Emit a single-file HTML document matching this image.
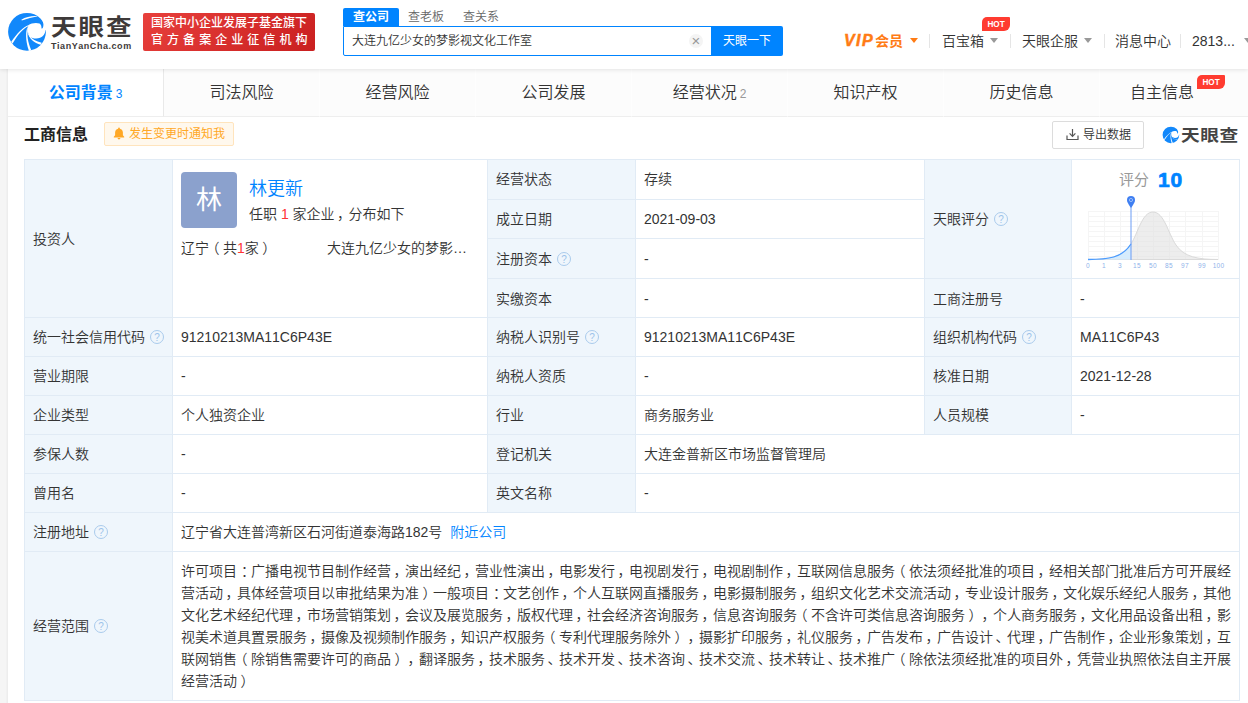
<!DOCTYPE html>
<html lang="zh-CN">
<head>
<meta charset="utf-8">
<title>天眼查</title>
<style>
*{box-sizing:border-box;margin:0;padding:0}
html,body{width:1248px;height:703px;overflow:hidden;background:#f5f5f5}
body{text-spacing-trim:space-all;font-kerning:none;font-family:"Liberation Sans","Noto Sans CJK SC",sans-serif;font-size:14px;color:#333;position:relative}
.abs{position:absolute;white-space:nowrap}
/* header */
#hdr{position:absolute;left:0;top:0;width:1248px;height:69px;background:#fff;box-shadow:0 1px 4px rgba(0,0,0,.10);z-index:5}
#content{position:absolute;left:8px;top:69px;width:1240px;height:634px;background:#fff}
/* tabs */
#tabs{position:absolute;left:8px;top:69px;width:1248px;height:48px;background:#fff}
.tab{position:absolute;top:0;height:48px;width:156px;text-align:center;line-height:47px;font-size:16px;color:#333;font-weight:350;background:#fcfcfc;border-right:1px solid #fefefe;border-bottom:1px solid #eee}
.tab.on{background:#fff;color:#0084ff;font-weight:bold;border-right:1px solid #e9e9e9}
.tab small{font-size:12px;font-weight:normal;color:#999;margin-left:3px}
.tab.on small{color:#0084ff}
.hot{display:inline-block;background:#ff3b30;color:#fff;font-size:9.500px;font-weight:bold;line-height:13.500px;height:14px;width:28px;text-align:center;border-radius:5px 1px 6px 0;letter-spacing:0}
.hot b{display:inline-block;transform:scaleX(.86);font-weight:bold}
.tri{width:0;height:0;border:4px solid transparent;border-top:5px solid #999;border-bottom:0}
.sep{top:34px;width:1px;height:14px;background:#e5e5e5}
/* table */
.ln{background:#e1ebf5}
.t{font-size:14px;color:#333;font-weight:350}
.pc,.pm,.pl,.pr{position:relative}
.pc{left:2.500px}.pm{left:4px}.pl{left:-3.500px}.pr{left:3.500px}
.t .q{vertical-align:middle;position:relative;top:-1px}
#tbl{position:absolute;left:24px;top:159px;width:1216px;height:542px;border:1px solid #e0eaf4;background:#fff}
.c{position:absolute;border-right:1px solid #e0eaf4;border-bottom:1px solid #e0eaf4;padding-left:8px;font-size:14px;color:#333;white-space:nowrap;display:flex;align-items:center}
.l{background:#f0f6fc}
.q{display:inline-block;width:14px;height:14px;border:1px solid #aacbec;border-radius:50%;margin-left:5px;color:#9dc3ea;font-size:10px;line-height:13.500px;text-align:center;font-family:"Liberation Sans",sans-serif}
a{color:#0084ff;text-decoration:none}
</style>
</head>
<body>
<div id="content"></div>
<div class="abs" style="left:6px;top:69px;width:2px;height:634px;background:linear-gradient(90deg,#f3f3f3,#ebebeb)"></div>
<div id="tabs">
  <div class="tab on" style="left:0">公司背景<small>3</small></div>
  <div class="tab" style="left:156px">司法风险</div>
  <div class="tab" style="left:312px">经营风险</div>
  <div class="tab" style="left:468px">公司发展</div>
  <div class="tab" style="left:624px">经营状况<small>2</small></div>
  <div class="tab" style="left:780px">知识产权</div>
  <div class="tab" style="left:936px">历史信息</div>
  <div class="tab" style="left:1092px">自主信息<span class="hot" style="position:relative;top:-13px;margin-left:3px"><b>HOT</b></span></div>
</div>
<div id="hdr">
  <svg class="abs" style="left:4px;top:8px" width="48" height="48" viewBox="0 0 703 703">
    <circle cx="337" cy="349" r="277" fill="#1288fb"/>
    <path fill="#fff" d="M355 252 C400 222 470 210 520 228 C545 245 552 275 548 302 L566 298 C585 260 580 215 560 180 L650 180 L650 330 L610 322 C600 392 560 446 470 447 C430 447 400 437 376 420 C352 385 340 330 355 252 Z"/>
    <path fill="#fff" d="M362 248 C280 280 190 370 106 493 L126 520 C200 390 280 300 354 266 Z"/>
    <path fill="#fff" d="M346 270 C318 340 308 460 366 630 L400 620 C345 480 335 400 350 340 Z"/>
    <path fill="#fff" d="M345 350 C362 445 445 510 538 540 L552 508 C470 490 405 455 374 404 Z"/>
    <path fill="#fff" d="M254 172 C320 130 420 112 498 121 C420 136 340 158 262 183 Z"/>
  </svg>
  <div class="abs" style="left:51px;top:8px;font-size:25px;line-height:36px;font-weight:bold;color:#3e3a39;letter-spacing:2px;transform:scale(1.02,.9);transform-origin:0 29px">天眼查</div>
  <div class="abs" style="left:51px;top:39.500px;font-size:9px;line-height:12px;font-weight:bold;color:#3e3a39;letter-spacing:.55px">TianYanCha.com</div>
  <div class="abs" style="left:143px;top:13px;width:172px;height:38px;border-radius:2px;background:linear-gradient(135deg,#e8403c,#c91f1f);color:#fff;font-weight:500;font-size:12px;line-height:17px;padding:2px 0 0 8px">
    <div style="letter-spacing:0">国家中小企业发展子基金旗下</div>
    <div style="letter-spacing:4.050px">官方备案企业征信机构</div>
  </div>
  <div class="abs" style="left:343px;top:8px;width:56px;height:18px;background:#0084ff;color:#fff;font-size:12px;font-weight:bold;line-height:18px;text-align:center;border-radius:2px 2px 0 0">查公司</div>
  <div class="abs" style="left:408px;top:8px;font-size:12px;line-height:18px;color:#666;font-weight:350">查老板</div>
  <div class="abs" style="left:463px;top:8px;font-size:12px;line-height:18px;color:#666;font-weight:350">查关系</div>
  <div class="abs" style="left:343px;top:26px;width:370px;height:30px;border:1px solid #0084ff;border-radius:0 0 0 2px;background:#fff;font-size:12px;line-height:28px;padding-left:8px;color:#333;font-weight:350">大连九亿少女的梦影视文化工作室</div>
  <div class="abs" style="left:689px;top:34px;width:14px;height:14px;border-radius:50%;background:#f4f4f4;color:#999;font-size:15px;line-height:13px;text-align:center">×</div>
  <div class="abs" style="left:711px;top:26px;width:72px;height:30px;background:#0084ff;color:#fff;font-size:12px;line-height:30px;text-align:center;border-radius:0 2px 2px 0">天眼一下</div>

  <div class="abs" style="left:844px;top:30px;font-size:14px;line-height:22px;font-weight:bold;color:#ff7b14"><i style="font-size:16px;letter-spacing:1.400px;-webkit-text-stroke:.5px #ff7b14">VIP</i><span style="margin-left:1px">会员</span></div>
  <div class="abs tri" style="left:910px;top:38px;border-top-color:#ff7b14"></div>
  <div class="abs sep" style="left:929px"></div>
  <div class="abs" style="left:942px;top:30px;font-size:14px;line-height:22px;font-weight:350">百宝箱</div>
  <div class="abs tri" style="left:990px;top:38px"></div>
  <div class="abs hot" style="left:982px;top:17px"><b>HOT</b></div>
  <div class="abs sep" style="left:1010px"></div>
  <div class="abs" style="left:1022px;top:30px;font-size:14px;line-height:22px;font-weight:350">天眼企服</div>
  <div class="abs tri" style="left:1084px;top:38px"></div>
  <div class="abs sep" style="left:1104px"></div>
  <div class="abs" style="left:1115px;top:30px;font-size:14px;line-height:22px;font-weight:350">消息中心</div>
  <div class="abs sep" style="left:1180px"></div>
  <div class="abs" style="left:1192px;top:30px;font-size:14px;line-height:22px;font-weight:350">2813...</div>
  <div class="abs tri" style="left:1244px;top:38px"></div>
</div>
<!--TABLE-START-->
<div class="abs" style="left:24px;top:159px;width:148px;height:541px;background:#eff6fc"></div>
<div class="abs" style="left:487px;top:159px;width:148px;height:353px;background:#eff6fc"></div>
<div class="abs" style="left:924px;top:159px;width:147px;height:275px;background:#eff6fc"></div>
<div class="abs ln" style="left:24px;top:159px;width:1216px;height:1px"></div>
<div class="abs ln" style="left:487px;top:199px;width:438px;height:1px"></div>
<div class="abs ln" style="left:487px;top:238px;width:438px;height:1px"></div>
<div class="abs ln" style="left:487px;top:278px;width:753px;height:1px"></div>
<div class="abs ln" style="left:24px;top:317px;width:1216px;height:1px"></div>
<div class="abs ln" style="left:24px;top:356px;width:1216px;height:1px"></div>
<div class="abs ln" style="left:24px;top:395px;width:1216px;height:1px"></div>
<div class="abs ln" style="left:24px;top:434px;width:1216px;height:1px"></div>
<div class="abs ln" style="left:24px;top:473px;width:1216px;height:1px"></div>
<div class="abs ln" style="left:24px;top:512px;width:1216px;height:1px"></div>
<div class="abs ln" style="left:24px;top:551px;width:1216px;height:1px"></div>
<div class="abs ln" style="left:24px;top:700px;width:1216px;height:1px"></div>
<div class="abs ln" style="left:24px;top:159px;width:1px;height:542px"></div>
<div class="abs ln" style="left:1239px;top:159px;width:1px;height:542px"></div>
<div class="abs ln" style="left:172px;top:159px;width:1px;height:542px"></div>
<div class="abs ln" style="left:487px;top:159px;width:1px;height:354px"></div>
<div class="abs ln" style="left:635px;top:159px;width:1px;height:354px"></div>
<div class="abs ln" style="left:924px;top:159px;width:1px;height:276px"></div>
<div class="abs ln" style="left:1071px;top:159px;width:1px;height:276px"></div>
<div class="abs t" style="left:33px;top:161px;height:157px;line-height:157px;">投资人</div>
<div class="abs t" style="left:496px;top:160px;height:39px;line-height:39px;">经营状态</div>
<div class="abs t" style="left:644px;top:160px;height:39px;line-height:39px;">存续</div>
<div class="abs t" style="left:496px;top:200px;height:38px;line-height:38px;">成立日期</div>
<div class="abs t" style="left:644px;top:200px;height:38px;line-height:38px;">2021-09-03</div>
<div class="abs t" style="left:496px;top:239.5px;height:39.0px;line-height:39.0px;">注册资本<span class="q">?</span></div>
<div class="abs t" style="left:644px;top:239.5px;height:39.0px;line-height:39.0px;">-</div>
<div class="abs t" style="left:496px;top:279.5px;height:38.0px;line-height:38.0px;">实缴资本</div>
<div class="abs t" style="left:644px;top:279.5px;height:38.0px;line-height:38.0px;">-</div>
<div class="abs t" style="left:933px;top:160px;height:118px;line-height:118px;">天眼评分<span class="q">?</span></div>
<div class="abs t" style="left:933px;top:279.5px;height:38.0px;line-height:38.0px;">工商注册号</div>
<div class="abs t" style="left:1080px;top:279.5px;height:38.0px;line-height:38.0px;">-</div>
<div class="abs t" style="left:33px;top:318px;height:38px;line-height:38px;">统一社会信用代码<span class="q">?</span></div>
<div class="abs t" style="left:181px;top:318px;height:38px;line-height:38px;">91210213MA11C6P43E</div>
<div class="abs t" style="left:496px;top:318px;height:38px;line-height:38px;">纳税人识别号<span class="q">?</span></div>
<div class="abs t" style="left:644px;top:318px;height:38px;line-height:38px;">91210213MA11C6P43E</div>
<div class="abs t" style="left:933px;top:318px;height:38px;line-height:38px;">组织机构代码<span class="q">?</span></div>
<div class="abs t" style="left:1080px;top:318px;height:38px;line-height:38px;">MA11C6P43</div>
<div class="abs t" style="left:33px;top:357px;height:38px;line-height:38px;">营业期限</div>
<div class="abs t" style="left:181px;top:357px;height:38px;line-height:38px;">-</div>
<div class="abs t" style="left:496px;top:357px;height:38px;line-height:38px;">纳税人资质</div>
<div class="abs t" style="left:644px;top:357px;height:38px;line-height:38px;">-</div>
<div class="abs t" style="left:933px;top:357px;height:38px;line-height:38px;">核准日期</div>
<div class="abs t" style="left:1080px;top:357px;height:38px;line-height:38px;">2021-12-28</div>
<div class="abs t" style="left:33px;top:396px;height:38px;line-height:38px;">企业类型</div>
<div class="abs t" style="left:181px;top:396px;height:38px;line-height:38px;">个人独资企业</div>
<div class="abs t" style="left:496px;top:396px;height:38px;line-height:38px;">行业</div>
<div class="abs t" style="left:644px;top:396px;height:38px;line-height:38px;">商务服务业</div>
<div class="abs t" style="left:933px;top:396px;height:38px;line-height:38px;">人员规模</div>
<div class="abs t" style="left:1080px;top:396px;height:38px;line-height:38px;">-</div>
<div class="abs t" style="left:33px;top:435px;height:38px;line-height:38px;">参保人数</div>
<div class="abs t" style="left:181px;top:435px;height:38px;line-height:38px;">-</div>
<div class="abs t" style="left:496px;top:435px;height:38px;line-height:38px;">登记机关</div>
<div class="abs t" style="left:644px;top:435px;height:38px;line-height:38px;">大连金普新区市场监督管理局</div>
<div class="abs t" style="left:33px;top:474px;height:38px;line-height:38px;">曾用名</div>
<div class="abs t" style="left:181px;top:474px;height:38px;line-height:38px;">-</div>
<div class="abs t" style="left:496px;top:474px;height:38px;line-height:38px;">英文名称</div>
<div class="abs t" style="left:644px;top:474px;height:38px;line-height:38px;">-</div>
<div class="abs t" style="left:33px;top:513px;height:38px;line-height:38px;">注册地址<span class="q">?</span></div>
<div class="abs t" style="left:181px;top:513px;height:38px;line-height:38px;">辽宁省大连普湾新区石河街道泰海路182号<a style="margin-left:8px">附近公司</a></div>
<div class="abs t" style="left:33px;top:552px;height:148px;line-height:148px;">经营范围<span class="q">?</span></div>
<div class="abs t" style="left:181px;top:560px;line-height:22px;width:1050px"><div>许可项目<span class="pm">：</span>广播电视节目制作经营<span class="pc">，</span>演出经纪<span class="pc">，</span>营业性演出<span class="pc">，</span>电影发行<span class="pc">，</span>电视剧发行<span class="pc">，</span>电视剧制作<span class="pc">，</span>互联网信息服务<span class="pl">（</span>依法须经批准的项目<span class="pc">，</span>经相关部门批准后方可开展经</div><div>营活动<span class="pc">，</span>具体经营项目以审批结果为准<span class="pr">）</span>一般项目<span class="pm">：</span>文艺创作<span class="pc">，</span>个人互联网直播服务<span class="pc">，</span>电影摄制服务<span class="pc">，</span>组织文化艺术交流活动<span class="pc">，</span>专业设计服务<span class="pc">，</span>文化娱乐经纪人服务<span class="pc">，</span>其他</div><div>文化艺术经纪代理<span class="pc">，</span>市场营销策划<span class="pc">，</span>会议及展览服务<span class="pc">，</span>版权代理<span class="pc">，</span>社会经济咨询服务<span class="pc">，</span>信息咨询服务<span class="pl">（</span>不含许可类信息咨询服务<span class="pr">）</span><span class="pc">，</span>个人商务服务<span class="pc">，</span>文化用品设备出租<span class="pc">，</span>影</div><div>视美术道具置景服务<span class="pc">，</span>摄像及视频制作服务<span class="pc">，</span>知识产权服务<span class="pl">（</span>专利代理服务除外<span class="pr">）</span><span class="pc">，</span>摄影扩印服务<span class="pc">，</span>礼仪服务<span class="pc">，</span>广告发布<span class="pc">，</span>广告设计<span class="pc">、</span>代理<span class="pc">，</span>广告制作<span class="pc">，</span>企业形象策划<span class="pc">，</span>互</div><div>联网销售<span class="pl">（</span>除销售需要许可的商品<span class="pr">）</span><span class="pc">，</span>翻译服务<span class="pc">，</span>技术服务<span class="pc">、</span>技术开发<span class="pc">、</span>技术咨询<span class="pc">、</span>技术交流<span class="pc">、</span>技术转让<span class="pc">、</span>技术推广<span class="pl">（</span>除依法须经批准的项目外<span class="pc">，</span>凭营业执照依法自主开展</div><div>经营活动<span class="pr">）</span></div></div>
<!--TABLE-END-->
<!--EXTRA-START-->
<div class="abs" style="left:24px;top:122.500px;font-size:16px;line-height:24px;font-weight:bold;color:#222">工商信息</div>
<div class="abs" style="left:104px;top:122px;width:130px;height:24px;border:1px solid #ffe4bd;border-radius:2px;background:#fff8ed"></div>
<svg class="abs" style="left:113px;top:127px" width="12" height="13" viewBox="0 0 12 13"><path fill="#ffa826" d="M6 0.6c.5 0 .9.4.9.9v.3c1.8.4 3 1.9 3 3.8v2.6l1.3 1.6v.6H.8v-.6l1.3-1.6V5.600c0-1.900 1.200-3.400 3-3.800v-.3c0-.5.4-.9.9-.9zM4.600 11.100h2.800c0 .8-.6 1.300-1.400 1.300s-1.400-.5-1.400-1.300z"/></svg>
<div class="abs" style="left:129px;top:122px;font-size:12px;line-height:24px;color:#ffa826">发生变更时通知我</div>

<div class="abs" style="left:1052px;top:121px;width:92px;height:28px;border:1px solid #dcdcdc;border-radius:2px;background:#fff"></div>
<svg class="abs" style="left:1066px;top:128px" width="13" height="13" viewBox="0 0 13 13" fill="none" stroke="#555" stroke-width="1.2"><path d="M6.5 1v7M3.600 5.400l2.900 2.900 2.900-2.900M1 7.500v4h11v-4"/></svg>
<div class="abs" style="left:1083px;top:121px;font-size:12px;line-height:28px;color:#333;font-weight:350">导出数据</div>

<svg class="abs" style="left:1162px;top:126px" width="18" height="18" viewBox="40 50 600 600">
  <circle cx="337" cy="349" r="277" fill="#1288fb"/>
  <path fill="#fff" d="M355 252 C400 222 470 210 520 228 C545 245 552 275 548 302 L566 298 C585 260 580 215 560 180 L650 180 L650 330 L610 322 C600 392 560 446 470 447 C430 447 400 437 376 420 C352 385 340 330 355 252 Z"/>
  <path fill="#fff" d="M362 248 C280 280 190 370 106 493 L126 520 C200 390 280 300 354 266 Z"/>
  <path fill="#fff" d="M346 270 C318 340 308 460 366 630 L400 620 C345 480 335 400 350 340 Z"/>
  <path fill="#fff" d="M345 350 C368 440 450 502 543 528 L552 510 C470 495 400 460 372 406 Z"/>
</svg>
<div class="abs" style="left:1181px;top:122px;font-size:18px;line-height:26px;font-weight:bold;color:#444;letter-spacing:.5px;transform:scale(1.04,.86);transform-origin:0 21px">天眼查</div>

<!-- investor cell -->
<div class="abs" style="left:181px;top:172px;width:56px;height:56px;border-radius:4px;background:#8ba1cd;color:#fff;font-size:26px;line-height:56px;text-align:center;font-weight:400">林</div>
<div class="abs" style="left:249px;top:176px;font-size:18px;line-height:26px;color:#0084ff;font-weight:350">林更新</div>
<div class="abs t" style="left:249px;top:203px;line-height:22px">任职 <span style="color:#f33">1</span> 家企业<span class="pc">，</span>分布如下</div>
<div class="abs t" style="left:181px;top:236.500px;line-height:22px">辽宁<span class="pl">（</span>共<span style="color:#f33">1</span>家<span class="pr">）</span></div>
<div class="abs t" style="left:327px;top:236.500px;line-height:22px;width:142px;overflow:hidden;text-overflow:ellipsis">大连九亿少女的梦影视文化工作室</div>

<!-- score -->
<div class="abs" style="left:1119px;top:168px;font-size:15px;line-height:24px;color:#999">评分</div>
<div class="abs" style="left:1158px;top:166px;font-size:21px;line-height:28px;color:#0084ff;font-weight:bold;letter-spacing:.8px;-webkit-text-stroke:.7px #0084ff">10</div>
<svg class="abs" style="left:1080px;top:190px" width="152" height="84" viewBox="0 0 152 84">
  <g stroke="#f5f5f5" stroke-width="1" fill="none">
    <path d="M8.500 21.500h130M8.500 26.500h130M8.500 31.500h130M8.500 36.500h130M8.500 41.500h130M8.500 46.500h130M8.500 51.500h130M8.500 56.500h130M8.500 61.500h130M8.500 66.500h130"/>
    <path d="M8.500 21v49M24.500 21v49M40.500 21v49M57.500 21v49M73.500 21v49M89.500 21v49M105.500 21v49M122.500 21v49M138.500 21v49"/>
  </g>
  <path id="bell" d="M8 69.500 C28 69.500 42 68 51 54 C58 43 62 22 73 22 C84 22 88 43 96 55 C104 67 118 69.500 138 69.500 Z" fill="#dedede" fill-opacity=".55" stroke="#dadada" stroke-width="1"/>
  <path d="M8 69.500 C28 69.500 42 68 51 54 L51 69.500 Z" fill="#d6ecfd"/>
  <path d="M8 69.500 C28 69.500 42 68 51 54" fill="none" stroke="#4a9bff" stroke-width="1.300"/>
  <path d="M51 16v54" stroke="#6a9cf5" stroke-width="1"/>
  <path d="M51 18 C48 13.500 47 12 47 10 A4 4 0 0 1 55 10 C55 12 54 13.500 51 18 Z" fill="#3f7ff2"/>
  <circle cx="51" cy="10" r="1.600" fill="none" stroke="#bcd4fb" stroke-width=".7"/>
  <g font-family="Liberation Sans, sans-serif" font-size="6.500" letter-spacing=".3" fill="#8fb3ea" text-anchor="middle">
    <text x="8" y="78">0</text><text x="24" y="78">1</text><text x="40" y="78">3</text><text x="57" y="78">15</text><text x="73" y="78">50</text><text x="89" y="78">85</text><text x="105" y="78">97</text><text x="122" y="78">99</text><text x="138.500" y="78">100</text>
  </g>
</svg>

<!--EXTRA-END-->
</body>
</html>
